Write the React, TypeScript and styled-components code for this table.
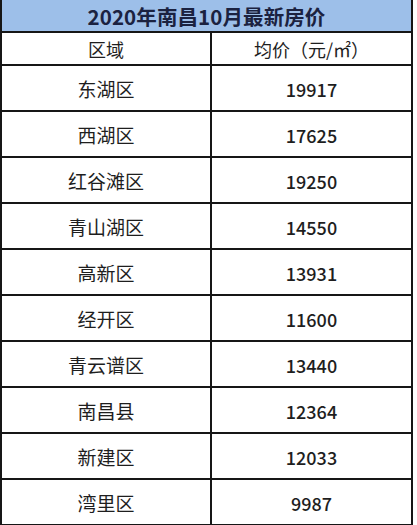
import React from "react";
import styled, { createGlobalStyle } from "styled-components";

const Global = createGlobalStyle`
  html, body { margin: 0; padding: 0; background: #fff; }
  body { font-family: "Noto Sans CJK SC", "Noto Sans", sans-serif; }
`;

const Table = styled.div`
  width: 413px;
  box-sizing: border-box;
  border-left: 2px solid #161616;
  border-right: 2px solid #161616;
  display: flex;
  flex-direction: column;
`;

const TitleRow = styled.div`
  height: 33px;
  box-sizing: border-box;
  background: #9dbfe9;
  border-bottom: 2px solid #161616;
  display: flex;
  align-items: center;
  justify-content: center;
  font-size: 20.5px;
  font-weight: 700;
  color: #1b2240;
  letter-spacing: 0.1px;
`;

const Row = styled.div<{ $h: number }>`
  height: ${(p) => p.$h}px;
  box-sizing: border-box;
  border-bottom: 2px solid #161616;
  display: grid;
  grid-template-columns: 210px 1fr;
  background: #fff;
`;

const Cell = styled.div<{ $num?: boolean; $first?: boolean }>`
  display: flex;
  align-items: center;
  justify-content: center;
  color: #1e1e1e;
  font-size: ${(p) => (p.$num ? "18px" : "19px")};
  font-weight: ${(p) => (p.$num ? 500 : 400)};
  border-right: ${(p) => (p.$first ? "2px solid #161616" : "none")};
  padding-top: 1px;
`;

const HeadCell = styled(Cell)`
  font-size: 18px;
`;

const data: [string, string][] = [
  ["东湖区", "19917"],
  ["西湖区", "17625"],
  ["红谷滩区", "19250"],
  ["青山湖区", "14550"],
  ["高新区", "13931"],
  ["经开区", "11600"],
  ["青云谱区", "13440"],
  ["南昌县", "12364"],
  ["新建区", "12033"],
  ["湾里区", "9987"],
];

export default function App() {
  return (
    <>
      <Global />
      <Table>
        <TitleRow>2020年南昌10月最新房价</TitleRow>
        <Row $h={33}>
          <HeadCell $first>区域</HeadCell>
          <HeadCell>均价（元/㎡）</HeadCell>
        </Row>
        {data.map(([name, price]) => (
          <Row $h={46} key={name}>
            <Cell $first>{name}</Cell>
            <Cell $num>{price}</Cell>
          </Row>
        ))}
      </Table>
    </>
  );
}
